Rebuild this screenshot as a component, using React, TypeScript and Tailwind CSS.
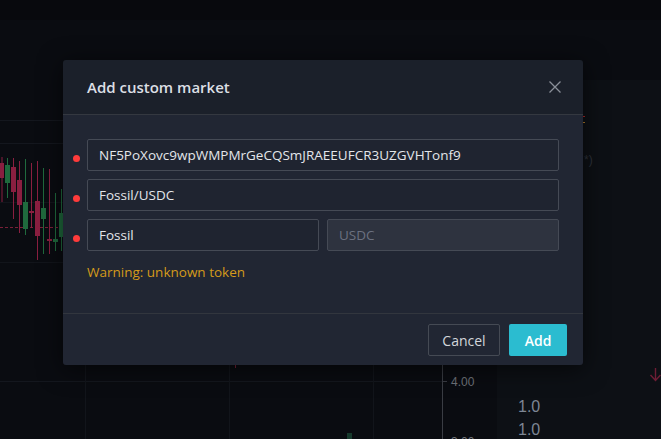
import React from "react";

const candles = [
  { x: 0, w: 4, o: 163, c: 178, h: 157, l: 202, up: false },
  { x: 5, w: 5, o: 183, c: 165, h: 158, l: 198, up: true },
  { x: 11, w: 5, o: 167, c: 192, h: 158, l: 219, up: false },
  { x: 17, w: 5, o: 180, c: 205, h: 161, l: 233, up: false },
  { x: 23, w: 5, o: 229, c: 202, h: 159, l: 235, up: true },
  { x: 29, w: 5, o: 211, c: 213, h: 163, l: 228, up: false },
  { x: 35, w: 5, o: 201, c: 236, h: 161, l: 260, up: false },
  { x: 41, w: 5, o: 219, c: 208, h: 168, l: 254, up: true },
  { x: 47, w: 5, o: 239, c: 241, h: 169, l: 254, up: false },
  { x: 53, w: 5, o: 242, c: 239, h: 193, l: 251, up: true },
  { x: 59, w: 5, o: 237, c: 213, h: 189, l: 251, up: true },
];

function Chart() {
  return (
    <svg width="661" height="439" className="block">
      {/* grid */}
      <line x1="0" y1="120.5" x2="497" y2="120.5" stroke="#14171e" />
      <line x1="0" y1="143.5" x2="497" y2="143.5" stroke="#14171e" />
      <line x1="0" y1="202.5" x2="497" y2="202.5" stroke="#12151b" />
      <line x1="0" y1="262.5" x2="497" y2="262.5" stroke="#12151b" />
      <line x1="0" y1="381.5" x2="443" y2="381.5" stroke="#14171e" />
      <line x1="85.5" y1="100" x2="85.5" y2="439" stroke="#12151b" />
      <line x1="229.5" y1="100" x2="229.5" y2="439" stroke="#12151b" />
      <line x1="373.5" y1="100" x2="373.5" y2="439" stroke="#12151b" />
      {/* axis */}
      <line x1="442.5" y1="100" x2="442.5" y2="439" stroke="#3a3d44" />
      <line x1="443" y1="381.5" x2="447" y2="381.5" stroke="#3a3d44" />
      <text x="451" y="386" fill="#6f737a" fontSize="12" fontFamily="'Liberation Sans', Arial, sans-serif">4.00</text>
      <text x="451" y="446" fill="#6f737a" fontSize="12" fontFamily="'Liberation Sans', Arial, sans-serif">3.00</text>
      {/* dashed price line */}
      <line x1="0" y1="227.5" x2="63" y2="227.5" stroke="#7a2038" strokeDasharray="3 2" />
      {candles.map((k, i) => {
        const col = k.up ? "#1f6a3d" : "#8a1f40";
        const top = Math.min(k.o, k.c);
        const hgt = Math.max(2, Math.abs(k.o - k.c));
        return (
          <g key={i}>
            <line x1={k.x + k.w / 2} y1={k.h} x2={k.x + k.w / 2} y2={k.l} stroke={col} strokeWidth="1" />
            <rect x={k.x} y={top} width={k.w} height={hgt} fill={col} />
          </g>
        );
      })}
      <line x1="235.5" y1="362" x2="235.5" y2="368" stroke="#7a2038" />
      <rect x="347" y="433" width="5" height="6" fill="#173a2d" />
      {/* right side marks */}
      <rect x="583" y="116" width="2" height="1" fill="#b02a2a" />
      <rect x="583" y="122" width="2" height="1" fill="#b07a2a" />
      <text x="584" y="164" fill="#2e323a" fontSize="12" fontFamily="'Liberation Sans', Arial, sans-serif">*)</text>
      <path d="M650.5 375 L655.5 380.5 L660.5 375 M655.5 368 L655.5 380.5" stroke="#6e1d35" strokeWidth="1.4" fill="none" />
    </svg>
  );
}

export default function App() {
  const font = { fontFamily: "'Open Sans', 'Noto Sans', sans-serif" };
  return (
    <div className="relative w-[661px] h-[439px] overflow-hidden bg-[#0a0c11]" style={font}>
      {/* background app */}
      <div className="flex flex-col h-full">
        <div className="h-[27px] bg-[#08090d]" />
        <div className="flex flex-1">
          <div className="flex-1" />
          <div className="w-[164px] flex flex-col">
            <div className="h-[60px]" />
            <div className="flex-1 bg-[#0d1015] pt-[317px] pl-[21px] flex flex-col gap-[4px] text-[16px] text-[#7d8694] leading-[19px]" style={{ fontFamily: "'Liberation Sans', Arial, sans-serif" }}>
              <span>1.0</span>
              <span>1.0</span>
            </div>
          </div>
        </div>
      </div>
      <div className="absolute inset-0 pointer-events-none">
        <Chart />
      </div>

      {/* modal */}
      <div className="absolute left-[63px] top-[60px] w-[520px] rounded-[3px] shadow-[0_4px_24px_rgba(0,0,0,0.6)] overflow-hidden">
        <div className="h-[55px] bg-[#1b202a] border-b border-[#343840] flex items-center justify-between pl-[24px] pr-[20px]">
          <span className="text-[15px] font-semibold text-[#dcdfe4]">Add custom market</span>
          <svg width="14" height="14" viewBox="0 0 14 14" className="mr-[1px]">
            <path d="M1.5 1.5 L12.5 12.5 M12.5 1.5 L1.5 12.5" stroke="#8a8f98" strokeWidth="1.3" />
          </svg>
        </div>
        <div className="bg-[#212633] px-[24px] pt-[24px] pb-[32px] flex flex-col gap-[8px]">
          <Field value="NF5PoXovc9wpWMPMrGeCQSmJRAEEUFCR3UZGVHTonf9" dot />
          <Field value="Fossil/USDC" dot />
          <div className="grid grid-cols-2 gap-[8px]">
            <Field value="Fossil" dot />
            <div className="h-[32px] border border-[#454a55] bg-[#2e333f] rounded-[2px] flex items-center pl-[11px] text-[13.5px] text-[#6b7180]">
              USDC
            </div>
          </div>
          <div className="mt-[4px] text-[13.5px] text-[#d49a1a] leading-[18px]">Warning: unknown token</div>
        </div>
        <div className="bg-[#212633] border-t border-[#32363e] flex justify-end gap-[9px] pt-[10px] pb-[9px] pr-[16px]">
          <button className="h-[32px] w-[72px] border border-[#454a54] rounded-[2px] text-[14px] text-[#d3d6db]">Cancel</button>
          <button className="h-[32px] w-[58px] bg-[#2bbcd0] rounded-[2px] text-[14px] font-semibold text-white">Add</button>
        </div>
      </div>
    </div>
  );
}

function Field({ value, dot }: { value: string; dot?: boolean }) {
  return (
    <div className="relative">
      {dot && <span className="absolute left-[-14px] top-[16px] w-[7px] h-[7px] rounded-full bg-[#ff3b3b]" />}
      <div className="h-[32px] border border-[#454a55] bg-[#1f2430] rounded-[2px] flex items-center pl-[11px] text-[13.5px] text-[#e3e6ea]">
        {value}
      </div>
    </div>
  );
}
